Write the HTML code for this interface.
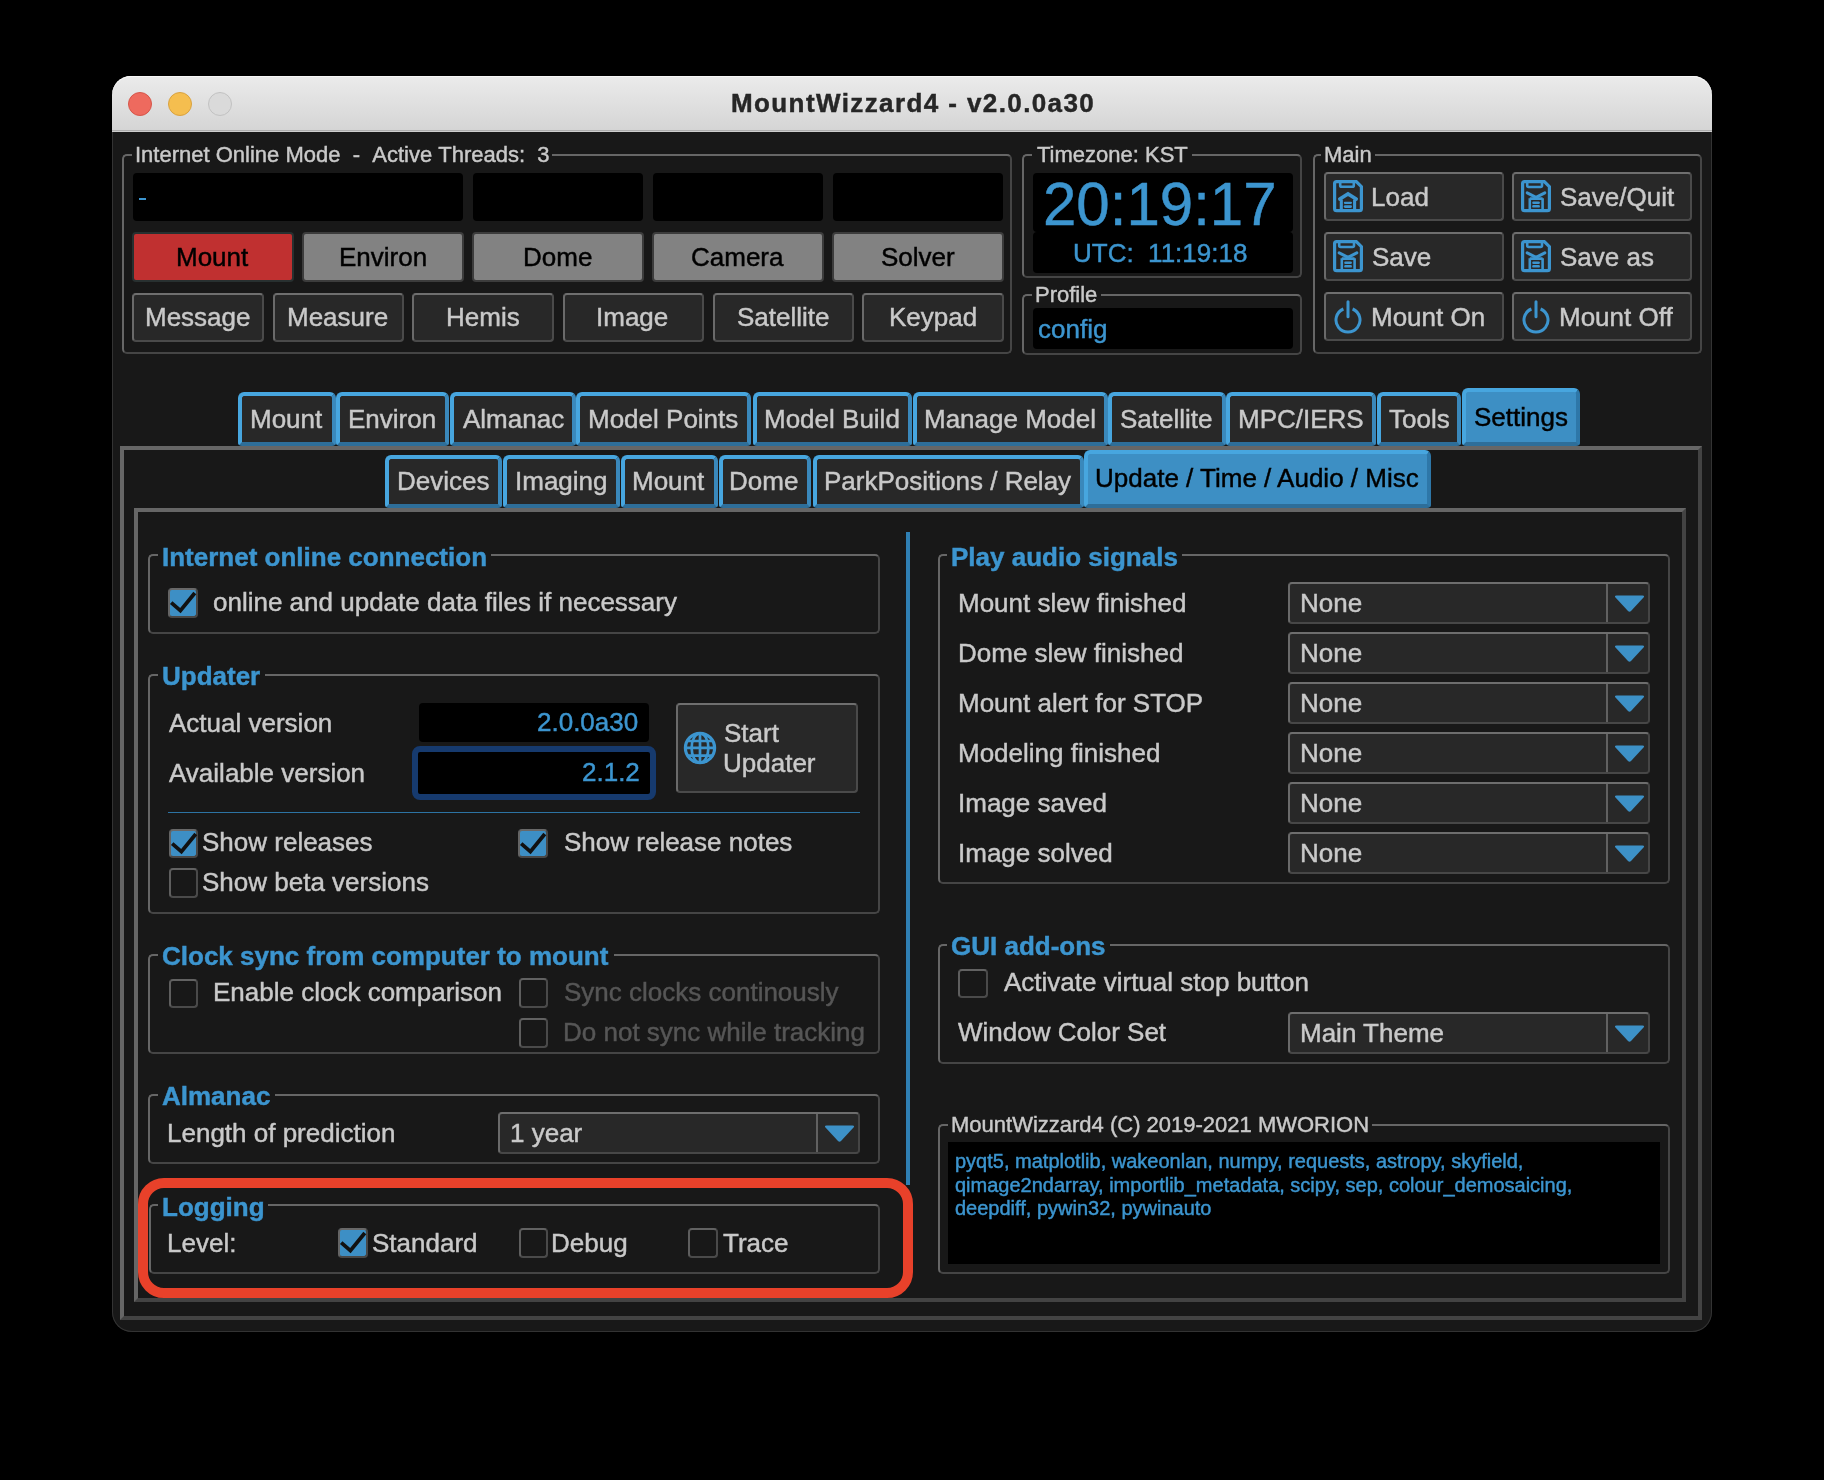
<!DOCTYPE html>
<html><head><meta charset="utf-8"><style>
html,body{margin:0;padding:0;background:#000;width:1824px;height:1480px;overflow:hidden}
body{position:relative;font-family:"Liberation Sans",sans-serif}
.a{position:absolute;box-sizing:border-box}
.t{position:absolute;white-space:pre;will-change:transform;-webkit-text-stroke:0.45px currentColor}
</style></head><body>
<div class="a" style="left:112px;top:76px;width:1600px;height:1256px;background:#181818;border-radius:19px 19px 20px 20px;box-shadow:inset 0 0 0 1px #333;overflow:hidden"></div>
<div class="a" style="left:112px;top:76px;width:1600px;height:54px;background:linear-gradient(#ebebeb,#d5d5d5);border-radius:19px 19px 0 0;"></div>
<div class="a" style="left:112px;top:130px;width:1600px;height:1px;background:#acacac;"></div>
<div class="a" style="left:112px;top:131px;width:1600px;height:1px;background:#cdcdcd;"></div>
<div class="a" style="left:112px;top:76px;width:1600px;height:20px;border-radius:19px 19px 0 0;box-shadow:inset 0 1px 0 #f8f8f8"></div>
<div class="a" style="left:128px;top:92px;width:24px;height:24px;border-radius:50%;background:#ee6a5e;box-sizing:border-box;border:1px solid #d6564a"></div>
<div class="a" style="left:168px;top:92px;width:24px;height:24px;border-radius:50%;background:#f5be4f;box-sizing:border-box;border:1px solid #d9a240"></div>
<div class="a" style="left:208px;top:92px;width:24px;height:24px;border-radius:50%;background:#dadada;box-sizing:border-box;border:1px solid #c2c2c2"></div>
<div class="t" style="left:730.70px;top:90.39px;font-size:26px;line-height:26px;color:#262626;font-weight:bold;letter-spacing:1.4px;">MountWizzard4 - v2.0.0a30</div>
<div class="a" style="left:122px;top:154px;width:890px;height:200px;border-style:solid;border-width:2px;border-color:#666666 #454545 #454545 #666666;border-radius:5px;"></div>
<div class="a" style="left:131.5px;top:153px;width:420.0px;height:5px;background:#181818;"></div>
<div class="t" style="left:134.50px;top:144.38px;font-size:22px;line-height:22px;color:#c9c9c9;">Internet&nbsp;Online&nbsp;Mode&nbsp;&nbsp;-&nbsp;&nbsp;Active&nbsp;Threads:&nbsp;&nbsp;3</div>
<div class="a" style="left:133px;top:173px;width:330px;height:47.5px;background:#000;border-radius:4px;"></div>
<div class="a" style="left:473px;top:173px;width:170px;height:47.5px;background:#000;border-radius:4px;"></div>
<div class="a" style="left:653px;top:173px;width:170px;height:47.5px;background:#000;border-radius:4px;"></div>
<div class="a" style="left:833px;top:173px;width:170px;height:47.5px;background:#000;border-radius:4px;"></div>
<div class="a" style="left:138.8px;top:198px;width:7.199999999999989px;height:2px;background:#3c95cf;"></div>
<div class="a" style="left:132px;top:232px;width:162px;height:50px;background:#c03030;border:2px solid #283030;border-radius:4px;"></div>
<div class="t" style="left:176.00px;top:244.19px;font-size:26px;line-height:26px;color:#000;">Mount</div>
<div class="a" style="left:302px;top:232px;width:162px;height:50px;background:#828282;border:2px solid #3c3c3c;border-radius:4px;"></div>
<div class="t" style="left:338.50px;top:244.19px;font-size:26px;line-height:26px;color:#000;">Environ</div>
<div class="a" style="left:472px;top:232px;width:172px;height:50px;background:#828282;border:2px solid #3c3c3c;border-radius:4px;"></div>
<div class="t" style="left:522.50px;top:244.19px;font-size:26px;line-height:26px;color:#000;">Dome</div>
<div class="a" style="left:652px;top:232px;width:172px;height:50px;background:#828282;border:2px solid #3c3c3c;border-radius:4px;"></div>
<div class="t" style="left:691.00px;top:244.19px;font-size:26px;line-height:26px;color:#000;">Camera</div>
<div class="a" style="left:832px;top:232px;width:172px;height:50px;background:#828282;border:2px solid #3c3c3c;border-radius:4px;"></div>
<div class="t" style="left:881.00px;top:244.19px;font-size:26px;line-height:26px;color:#000;">Solver</div>
<div class="a" style="left:132px;top:292.5px;width:132px;height:49.0px;background:#282828;border-style:solid;border-width:2px;border-color:#6f6f6f #4a4a4a #4a4a4a #6a6a6a;border-radius:4px;"></div>
<div class="t" style="left:144.50px;top:303.79px;font-size:26px;line-height:26px;color:#c9c9c9;">Message</div>
<div class="a" style="left:272.5px;top:292.5px;width:131.5px;height:49.0px;background:#282828;border-style:solid;border-width:2px;border-color:#6f6f6f #4a4a4a #4a4a4a #6a6a6a;border-radius:4px;"></div>
<div class="t" style="left:286.75px;top:303.79px;font-size:26px;line-height:26px;color:#c9c9c9;">Measure</div>
<div class="a" style="left:412px;top:292.5px;width:142px;height:49.0px;background:#282828;border-style:solid;border-width:2px;border-color:#6f6f6f #4a4a4a #4a4a4a #6a6a6a;border-radius:4px;"></div>
<div class="t" style="left:445.50px;top:303.79px;font-size:26px;line-height:26px;color:#c9c9c9;">Hemis</div>
<div class="a" style="left:562.5px;top:292.5px;width:141.5px;height:49.0px;background:#282828;border-style:solid;border-width:2px;border-color:#6f6f6f #4a4a4a #4a4a4a #6a6a6a;border-radius:4px;"></div>
<div class="t" style="left:596.25px;top:303.79px;font-size:26px;line-height:26px;color:#c9c9c9;">Image</div>
<div class="a" style="left:712.5px;top:292.5px;width:141.5px;height:49.0px;background:#282828;border-style:solid;border-width:2px;border-color:#6f6f6f #4a4a4a #4a4a4a #6a6a6a;border-radius:4px;"></div>
<div class="t" style="left:736.75px;top:303.79px;font-size:26px;line-height:26px;color:#c9c9c9;">Satellite</div>
<div class="a" style="left:862px;top:292.5px;width:142px;height:49.0px;background:#282828;border-style:solid;border-width:2px;border-color:#6f6f6f #4a4a4a #4a4a4a #6a6a6a;border-radius:4px;"></div>
<div class="t" style="left:888.50px;top:303.79px;font-size:26px;line-height:26px;color:#c9c9c9;">Keypad</div>
<div class="a" style="left:1022px;top:154px;width:280px;height:124px;border-style:solid;border-width:2px;border-color:#666666 #454545 #454545 #666666;border-radius:5px;"></div>
<div class="a" style="left:1032px;top:153px;width:160px;height:5px;background:#181818;"></div>
<div class="t" style="left:1037.00px;top:144.38px;font-size:22px;line-height:22px;color:#c9c9c9;">Timezone: KST</div>
<div class="a" style="left:1033px;top:173px;width:260px;height:58.5px;background:#000;border-radius:4px;"></div>
<div class="a" style="left:1033px;top:231.5px;width:260px;height:41.0px;background:#000;border-radius:4px;"></div>
<div class="t" style="left:1043.20px;top:175.31px;font-size:60px;line-height:60px;color:#3c95cf;transform:scaleY(1.03);transform-origin:0 50.79px;">20:19:17</div>
<div class="t" style="left:1073.00px;top:239.59px;font-size:26px;line-height:26px;color:#3c95cf;">UTC:&nbsp;&nbsp;11:19:18</div>
<div class="a" style="left:1022px;top:294px;width:280px;height:60.5px;border-style:solid;border-width:2px;border-color:#666666 #454545 #454545 #666666;border-radius:5px;"></div>
<div class="a" style="left:1031.8px;top:293px;width:69.0px;height:5px;background:#181818;"></div>
<div class="t" style="left:1034.80px;top:284.18px;font-size:22px;line-height:22px;color:#c9c9c9;">Profile</div>
<div class="a" style="left:1033px;top:308.3px;width:260px;height:40.30000000000001px;background:#000;border-radius:4px;"></div>
<div class="t" style="left:1037.70px;top:315.79px;font-size:26px;line-height:26px;color:#3c95cf;">config</div>
<div class="a" style="left:1312.5px;top:154px;width:389.5px;height:200px;border-style:solid;border-width:2px;border-color:#666666 #454545 #454545 #666666;border-radius:5px;"></div>
<div class="a" style="left:1321.3px;top:153px;width:54.0px;height:5px;background:#181818;"></div>
<div class="t" style="left:1324.30px;top:143.98px;font-size:22px;line-height:22px;color:#c9c9c9;">Main</div>
<div class="a" style="left:1324.2px;top:172px;width:179.5px;height:49px;background:#282828;border-style:solid;border-width:2px;border-color:#6f6f6f #4a4a4a #4a4a4a #6a6a6a;border-radius:4px;"></div>
<div class="t" style="left:1371.20px;top:183.79px;font-size:26px;line-height:26px;color:#c9c9c9;">Load</div>
<svg class="a" style="left:1333.0px;top:179.8px" width="32" height="33" viewBox="0 0 32 33"><path d="M1.6 3.6 Q1.6 1.6 3.6 1.6 L23.3 1.6 L28.4 6.7 L28.4 28.7 Q28.4 30.7 26.4 30.7 L3.6 30.7 Q1.6 30.7 1.6 28.7 Z" fill="none" stroke="#3c95cf" stroke-width="3.2"/><path d="M7.2 1.6 L7.2 5.4 Q7.2 6.8 8.6 6.8 L19.4 6.8 Q20.8 6.8 20.8 5.4 L20.8 1.6" fill="none" stroke="#3c95cf" stroke-width="2.6"/>
<path d="M6.8 19.0 L15 13.9 L23.2 19.0" fill="none" stroke="#3c95cf" stroke-width="3.6" stroke-linejoin="miter" stroke-linecap="round"/>
<path d="M8.3 19.5 L8.3 30 M21.6 19.5 L21.6 30" stroke="#3c95cf" stroke-width="3.1"/>
<rect x="10.8" y="21.7" width="8.2" height="2.2" rx="1.1" fill="#3c95cf"/><rect x="10.8" y="25.3" width="8.2" height="2.6" rx="1.3" fill="#3c95cf"/></svg>
<div class="a" style="left:1512.3px;top:172px;width:179.5px;height:49px;background:#282828;border-style:solid;border-width:2px;border-color:#6f6f6f #4a4a4a #4a4a4a #6a6a6a;border-radius:4px;"></div>
<div class="t" style="left:1560.30px;top:183.79px;font-size:26px;line-height:26px;color:#c9c9c9;">Save/Quit</div>
<svg class="a" style="left:1521.1px;top:179.8px" width="32" height="33" viewBox="0 0 32 33"><path d="M1.6 3.6 Q1.6 1.6 3.6 1.6 L23.3 1.6 L28.4 6.7 L28.4 28.7 Q28.4 30.7 26.4 30.7 L3.6 30.7 Q1.6 30.7 1.6 28.7 Z" fill="none" stroke="#3c95cf" stroke-width="3.2"/><path d="M6.2 1.6 L6.2 5.6 Q6.2 7.0 7.6 7.0 L19.6 7.0 Q21 7.0 21 5.6 L21 1.6" fill="none" stroke="#3c95cf" stroke-width="2.6"/>
<path d="M6.2 12.8 L15 17.3 L23.8 12.8" fill="none" stroke="#3c95cf" stroke-width="3" stroke-linecap="round" stroke-linejoin="round"/>
<path d="M8.8 18.2 L8.8 30 M21.6 18.2 L21.6 30 M8.8 18.6 L21.6 18.6" fill="none" stroke="#3c95cf" stroke-width="2.6"/>
<rect x="11.2" y="21.5" width="7.7" height="2.4" rx="1.2" fill="#3c95cf"/><rect x="11.2" y="25.1" width="7.7" height="2.5" rx="1.2" fill="#3c95cf"/></svg>
<div class="a" style="left:1324.2px;top:232px;width:179.5px;height:49px;background:#282828;border-style:solid;border-width:2px;border-color:#6f6f6f #4a4a4a #4a4a4a #6a6a6a;border-radius:4px;"></div>
<div class="t" style="left:1372.20px;top:243.79px;font-size:26px;line-height:26px;color:#c9c9c9;">Save</div>
<svg class="a" style="left:1333.0px;top:239.8px" width="32" height="33" viewBox="0 0 32 33"><path d="M1.6 3.6 Q1.6 1.6 3.6 1.6 L23.3 1.6 L28.4 6.7 L28.4 28.7 Q28.4 30.7 26.4 30.7 L3.6 30.7 Q1.6 30.7 1.6 28.7 Z" fill="none" stroke="#3c95cf" stroke-width="3.2"/><path d="M6.2 1.6 L6.2 5.6 Q6.2 7.0 7.6 7.0 L19.6 7.0 Q21 7.0 21 5.6 L21 1.6" fill="none" stroke="#3c95cf" stroke-width="2.6"/>
<path d="M6.2 12.8 L15 17.3 L23.8 12.8" fill="none" stroke="#3c95cf" stroke-width="3" stroke-linecap="round" stroke-linejoin="round"/>
<path d="M8.8 18.2 L8.8 30 M21.6 18.2 L21.6 30 M8.8 18.6 L21.6 18.6" fill="none" stroke="#3c95cf" stroke-width="2.6"/>
<rect x="11.2" y="21.5" width="7.7" height="2.4" rx="1.2" fill="#3c95cf"/><rect x="11.2" y="25.1" width="7.7" height="2.5" rx="1.2" fill="#3c95cf"/></svg>
<div class="a" style="left:1512.3px;top:232px;width:179.5px;height:49px;background:#282828;border-style:solid;border-width:2px;border-color:#6f6f6f #4a4a4a #4a4a4a #6a6a6a;border-radius:4px;"></div>
<div class="t" style="left:1560.30px;top:243.79px;font-size:26px;line-height:26px;color:#c9c9c9;">Save as</div>
<svg class="a" style="left:1521.1px;top:239.8px" width="32" height="33" viewBox="0 0 32 33"><path d="M1.6 3.6 Q1.6 1.6 3.6 1.6 L23.3 1.6 L28.4 6.7 L28.4 28.7 Q28.4 30.7 26.4 30.7 L3.6 30.7 Q1.6 30.7 1.6 28.7 Z" fill="none" stroke="#3c95cf" stroke-width="3.2"/><path d="M6.2 1.6 L6.2 5.6 Q6.2 7.0 7.6 7.0 L19.6 7.0 Q21 7.0 21 5.6 L21 1.6" fill="none" stroke="#3c95cf" stroke-width="2.6"/>
<path d="M6.2 12.8 L15 17.3 L23.8 12.8" fill="none" stroke="#3c95cf" stroke-width="3" stroke-linecap="round" stroke-linejoin="round"/>
<path d="M8.8 18.2 L8.8 30 M21.6 18.2 L21.6 30 M8.8 18.6 L21.6 18.6" fill="none" stroke="#3c95cf" stroke-width="2.6"/>
<rect x="11.2" y="21.5" width="7.7" height="2.4" rx="1.2" fill="#3c95cf"/><rect x="11.2" y="25.1" width="7.7" height="2.5" rx="1.2" fill="#3c95cf"/></svg>
<div class="a" style="left:1324.2px;top:292px;width:179.5px;height:49px;background:#282828;border-style:solid;border-width:2px;border-color:#6f6f6f #4a4a4a #4a4a4a #6a6a6a;border-radius:4px;"></div>
<div class="t" style="left:1371.20px;top:303.79px;font-size:26px;line-height:26px;color:#c9c9c9;">Mount On</div>
<svg class="a" style="left:1333.9px;top:299.8px" width="28" height="36" viewBox="0 0 28 36"><path d="M9.4 9.0 A12 12 0 1 0 18.6 9.0" fill="none" stroke="#3c95cf" stroke-width="3"/>
<path d="M14 1.7 L14 16.7" stroke="#3c95cf" stroke-width="3" stroke-linecap="round"/></svg>
<div class="a" style="left:1512.3px;top:292px;width:179.5px;height:49px;background:#282828;border-style:solid;border-width:2px;border-color:#6f6f6f #4a4a4a #4a4a4a #6a6a6a;border-radius:4px;"></div>
<div class="t" style="left:1559.30px;top:303.79px;font-size:26px;line-height:26px;color:#c9c9c9;">Mount Off</div>
<svg class="a" style="left:1522.0px;top:299.8px" width="28" height="36" viewBox="0 0 28 36"><path d="M9.4 9.0 A12 12 0 1 0 18.6 9.0" fill="none" stroke="#3c95cf" stroke-width="3"/>
<path d="M14 1.7 L14 16.7" stroke="#3c95cf" stroke-width="3" stroke-linecap="round"/></svg>
<div class="a" style="left:120px;top:446px;width:1582px;height:874px;border-style:solid;border-width:4px;border-color:#666666 #434343 #434343 #666666;"></div>
<div class="a" style="left:238px;top:392px;width:97.5px;height:54px;background:#282828;border-style:solid;border-width:4px;border-color:#47a6df #3a88bb #2e6e99 #47a6df;border-radius:6px 6px 4px 4px"></div>
<div class="t" style="left:249.75px;top:405.99px;font-size:26px;line-height:26px;color:#c9c9c9;">Mount</div>
<div class="a" style="left:336px;top:392px;width:113px;height:54px;background:#282828;border-style:solid;border-width:4px;border-color:#47a6df #3a88bb #2e6e99 #47a6df;border-radius:6px 6px 4px 4px"></div>
<div class="t" style="left:348.00px;top:405.99px;font-size:26px;line-height:26px;color:#c9c9c9;">Environ</div>
<div class="a" style="left:450px;top:392px;width:125.5px;height:54px;background:#282828;border-style:solid;border-width:4px;border-color:#47a6df #3a88bb #2e6e99 #47a6df;border-radius:6px 6px 4px 4px"></div>
<div class="t" style="left:462.75px;top:405.99px;font-size:26px;line-height:26px;color:#c9c9c9;">Almanac</div>
<div class="a" style="left:576px;top:392px;width:175px;height:54px;background:#282828;border-style:solid;border-width:4px;border-color:#47a6df #3a88bb #2e6e99 #47a6df;border-radius:6px 6px 4px 4px"></div>
<div class="t" style="left:588.00px;top:405.99px;font-size:26px;line-height:26px;color:#c9c9c9;">Model Points</div>
<div class="a" style="left:752.5px;top:392px;width:159.0px;height:54px;background:#282828;border-style:solid;border-width:4px;border-color:#47a6df #3a88bb #2e6e99 #47a6df;border-radius:6px 6px 4px 4px"></div>
<div class="t" style="left:764.00px;top:405.99px;font-size:26px;line-height:26px;color:#c9c9c9;">Model Build</div>
<div class="a" style="left:912.5px;top:392px;width:195.0px;height:54px;background:#282828;border-style:solid;border-width:4px;border-color:#47a6df #3a88bb #2e6e99 #47a6df;border-radius:6px 6px 4px 4px"></div>
<div class="t" style="left:924.00px;top:405.99px;font-size:26px;line-height:26px;color:#c9c9c9;">Manage Model</div>
<div class="a" style="left:1108px;top:392px;width:117.5px;height:54px;background:#282828;border-style:solid;border-width:4px;border-color:#47a6df #3a88bb #2e6e99 #47a6df;border-radius:6px 6px 4px 4px"></div>
<div class="t" style="left:1120.25px;top:405.99px;font-size:26px;line-height:26px;color:#c9c9c9;">Satellite</div>
<div class="a" style="left:1226px;top:392px;width:149.5px;height:54px;background:#282828;border-style:solid;border-width:4px;border-color:#47a6df #3a88bb #2e6e99 #47a6df;border-radius:6px 6px 4px 4px"></div>
<div class="t" style="left:1237.75px;top:405.99px;font-size:26px;line-height:26px;color:#c9c9c9;">MPC/IERS</div>
<div class="a" style="left:1376.5px;top:392px;width:84.5px;height:54px;background:#282828;border-style:solid;border-width:4px;border-color:#47a6df #3a88bb #2e6e99 #47a6df;border-radius:6px 6px 4px 4px"></div>
<div class="t" style="left:1388.75px;top:405.99px;font-size:26px;line-height:26px;color:#c9c9c9;">Tools</div>
<div class="a" style="left:1462px;top:388px;width:118px;height:58px;background:#3d8fc4;border-style:solid;border-width:4px;border-color:#47a6df #2e77a8 #2e6e99 #47a6df;border-radius:6px 6px 4px 4px"></div>
<div class="t" style="left:1474.00px;top:403.59px;font-size:26px;line-height:26px;color:#000;">Settings</div>
<div class="a" style="left:134px;top:508px;width:1552px;height:794px;border-style:solid;border-width:4px;border-color:#666666 #434343 #434343 #666666;"></div>
<div class="a" style="left:384.5px;top:454.5px;width:117.0px;height:53.5px;background:#282828;border-style:solid;border-width:4px;border-color:#47a6df #3a88bb #2e6e99 #47a6df;border-radius:6px 6px 4px 4px"></div>
<div class="t" style="left:396.50px;top:468.49px;font-size:26px;line-height:26px;color:#c9c9c9;">Devices</div>
<div class="a" style="left:502.5px;top:454.5px;width:117.0px;height:53.5px;background:#282828;border-style:solid;border-width:4px;border-color:#47a6df #3a88bb #2e6e99 #47a6df;border-radius:6px 6px 4px 4px"></div>
<div class="t" style="left:514.50px;top:468.49px;font-size:26px;line-height:26px;color:#c9c9c9;">Imaging</div>
<div class="a" style="left:620.5px;top:454.5px;width:97.0px;height:53.5px;background:#282828;border-style:solid;border-width:4px;border-color:#47a6df #3a88bb #2e6e99 #47a6df;border-radius:6px 6px 4px 4px"></div>
<div class="t" style="left:632.00px;top:468.49px;font-size:26px;line-height:26px;color:#c9c9c9;">Mount</div>
<div class="a" style="left:718.5px;top:454.5px;width:92.5px;height:53.5px;background:#282828;border-style:solid;border-width:4px;border-color:#47a6df #3a88bb #2e6e99 #47a6df;border-radius:6px 6px 4px 4px"></div>
<div class="t" style="left:729.25px;top:468.49px;font-size:26px;line-height:26px;color:#c9c9c9;">Dome</div>
<div class="a" style="left:812.5px;top:454.5px;width:271.0px;height:53.5px;background:#282828;border-style:solid;border-width:4px;border-color:#47a6df #3a88bb #2e6e99 #47a6df;border-radius:6px 6px 4px 4px"></div>
<div class="t" style="left:823.50px;top:468.49px;font-size:26px;line-height:26px;color:#c9c9c9;">ParkPositions / Relay</div>
<div class="a" style="left:1084.2px;top:450px;width:347.29999999999995px;height:58px;background:#3d8fc4;border-style:solid;border-width:4px;border-color:#47a6df #2e77a8 #2e6e99 #47a6df;border-radius:6px 6px 4px 4px"></div>
<div class="t" style="left:1095.35px;top:465.49px;font-size:26px;line-height:26px;color:#000;">Update / Time / Audio / Misc</div>
<div class="a" style="left:906px;top:532px;width:4px;height:653px;background:#2f7fb3;"></div>
<div class="a" style="left:148px;top:554px;width:732px;height:80px;border-style:solid;border-width:2px;border-color:#666666 #454545 #454545 #666666;border-radius:5px;"></div>
<div class="a" style="left:157.5px;top:553px;width:333.0px;height:5px;background:#181818;"></div>
<div class="t" style="left:161.50px;top:543.99px;font-size:26px;line-height:26px;color:#3c95cf;font-weight:bold;">Internet online connection</div>
<div class="a" style="left:168.2px;top:588px;width:29.5px;height:29.5px;background:#3d8fc5;border-style:solid;border-width:2px;border-color:#686868 #484848 #484848 #646464;border-radius:4px;"></div>
<svg class="a" style="left:168.2px;top:588px" width="30" height="30" viewBox="0 0 30 30"><path d="M3.2 14.6 L12.4 22.6 L26.8 5.0" fill="none" stroke="#111" stroke-width="3.8" stroke-linejoin="miter" stroke-miterlimit="6"/></svg>
<div class="t" style="left:213.40px;top:589.49px;font-size:26px;line-height:26px;color:#c9c9c9;">online and update data files if necessary</div>
<div class="a" style="left:148px;top:674px;width:732px;height:240px;border-style:solid;border-width:2px;border-color:#666666 #454545 #454545 #666666;border-radius:5px;"></div>
<div class="a" style="left:157.5px;top:673px;width:107.0px;height:5px;background:#181818;"></div>
<div class="t" style="left:161.50px;top:663.39px;font-size:26px;line-height:26px;color:#3c95cf;font-weight:bold;">Updater</div>
<div class="t" style="left:168.50px;top:709.69px;font-size:26px;line-height:26px;color:#c9c9c9;">Actual version</div>
<div class="t" style="left:168.50px;top:759.69px;font-size:26px;line-height:26px;color:#c9c9c9;">Available version</div>
<div class="a" style="left:418.6px;top:702.8px;width:230.39999999999998px;height:39.700000000000045px;background:#000;border-radius:4px;"></div>
<div class="t" style="left:537.00px;top:709.49px;font-size:26px;line-height:26px;color:#3c95cf;">2.0.0a30</div>
<div class="a" style="left:412.3px;top:745.8px;width:243.49999999999994px;height:54.0px;background:#000;border:6.5px solid #163a6e;border-radius:8px;"></div>
<div class="t" style="left:582.00px;top:759.39px;font-size:26px;line-height:26px;color:#3c95cf;">2.1.2</div>
<div class="a" style="left:676.3px;top:702.5px;width:181.5px;height:90.70000000000005px;background:#282828;border-style:solid;border-width:2px;border-color:#6f6f6f #4a4a4a #4a4a4a #6a6a6a;border-radius:4px;"></div>
<div class="t" style="left:723.80px;top:719.69px;font-size:26px;line-height:26px;color:#c9c9c9;">Start</div>
<div class="t" style="left:722.80px;top:749.79px;font-size:26px;line-height:26px;color:#c9c9c9;">Updater</div>
<svg class="a" style="left:683px;top:731px" width="34" height="34" viewBox="0 0 34 34">
<circle cx="17" cy="17" r="14.6" fill="none" stroke="#3c95cf" stroke-width="3.2"/>
<ellipse cx="17" cy="17" rx="8.4" ry="14.6" fill="none" stroke="#3c95cf" stroke-width="2.7"/>
<path d="M17 2 L17 32 M2.5 16.8 L31.5 16.8 M4.2 10 L29.8 10 M4.2 24.6 L29.8 24.6" stroke="#3c95cf" stroke-width="2.7"/>
</svg>
<div class="a" style="left:168px;top:812px;width:692px;height:1.2000000000000455px;background:#2c73a3;"></div>
<div class="a" style="left:168.5px;top:828.8px;width:29.5px;height:29.5px;background:#3d8fc5;border-style:solid;border-width:2px;border-color:#686868 #484848 #484848 #646464;border-radius:4px;"></div>
<svg class="a" style="left:168.5px;top:828.8px" width="30" height="30" viewBox="0 0 30 30"><path d="M3.2 14.6 L12.4 22.6 L26.8 5.0" fill="none" stroke="#111" stroke-width="3.8" stroke-linejoin="miter" stroke-miterlimit="6"/></svg>
<div class="t" style="left:202.20px;top:829.39px;font-size:26px;line-height:26px;color:#c9c9c9;">Show releases</div>
<div class="a" style="left:518.4px;top:828.8px;width:29.5px;height:29.5px;background:#3d8fc5;border-style:solid;border-width:2px;border-color:#686868 #484848 #484848 #646464;border-radius:4px;"></div>
<svg class="a" style="left:518.4px;top:828.8px" width="30" height="30" viewBox="0 0 30 30"><path d="M3.2 14.6 L12.4 22.6 L26.8 5.0" fill="none" stroke="#111" stroke-width="3.8" stroke-linejoin="miter" stroke-miterlimit="6"/></svg>
<div class="t" style="left:563.50px;top:829.39px;font-size:26px;line-height:26px;color:#c9c9c9;">Show release notes</div>
<div class="a" style="left:168.5px;top:868.3px;width:29.5px;height:29.5px;border-style:solid;border-width:2px;border-color:#626262 #4a4a4a #4a4a4a #5e5e5e;border-radius:4px;"></div>
<div class="t" style="left:202.20px;top:869.39px;font-size:26px;line-height:26px;color:#c9c9c9;">Show beta versions</div>
<div class="a" style="left:148px;top:954px;width:732px;height:100px;border-style:solid;border-width:2px;border-color:#666666 #454545 #454545 #666666;border-radius:5px;"></div>
<div class="a" style="left:157.5px;top:953px;width:456.0px;height:5px;background:#181818;"></div>
<div class="t" style="left:161.50px;top:942.99px;font-size:26px;line-height:26px;color:#3c95cf;font-weight:bold;">Clock sync from computer to mount</div>
<div class="a" style="left:168.5px;top:978.5px;width:29.5px;height:29.5px;border-style:solid;border-width:2px;border-color:#626262 #4a4a4a #4a4a4a #5e5e5e;border-radius:4px;"></div>
<div class="t" style="left:213.20px;top:979.29px;font-size:26px;line-height:26px;color:#c9c9c9;">Enable clock comparison</div>
<div class="a" style="left:518.6px;top:978.3px;width:29.5px;height:29.5px;border-style:solid;border-width:2px;border-color:#626262 #4a4a4a #4a4a4a #5e5e5e;border-radius:4px;"></div>
<div class="t" style="left:564.00px;top:979.19px;font-size:26px;line-height:26px;color:#565656;">Sync clocks continously</div>
<div class="a" style="left:518.6px;top:1018.3px;width:29.5px;height:29.5px;border-style:solid;border-width:2px;border-color:#626262 #4a4a4a #4a4a4a #5e5e5e;border-radius:4px;"></div>
<div class="t" style="left:563.00px;top:1019.49px;font-size:26px;line-height:26px;color:#565656;">Do not sync while tracking</div>
<div class="a" style="left:148px;top:1094px;width:732px;height:70px;border-style:solid;border-width:2px;border-color:#666666 #454545 #454545 #666666;border-radius:5px;"></div>
<div class="a" style="left:157.5px;top:1093px;width:117.0px;height:5px;background:#181818;"></div>
<div class="t" style="left:161.50px;top:1083.39px;font-size:26px;line-height:26px;color:#3c95cf;font-weight:bold;">Almanac</div>
<div class="t" style="left:167.20px;top:1119.59px;font-size:26px;line-height:26px;color:#c9c9c9;">Length of prediction</div>
<div class="a" style="left:498px;top:1112px;width:362px;height:42px;background:#282828;border-style:solid;border-width:2px;border-color:#6e6e6e #454545 #474747 #6a6a6a;border-radius:4px;"></div>
<div class="a" style="left:816px;top:1114px;width:2px;height:38px;background:#616161;"></div>
<svg class="a" style="left:824px;top:1124px" width="32" height="19" viewBox="0 0 32 19"><path d="M2.5 1.5 L28.5 1.5 Q31 1.5 29.5 3.5 L17 17 Q15.5 18.5 14 17 L1.5 3.5 Q0 1.5 2.5 1.5 Z" fill="#3d91c7"/></svg>
<div class="t" style="left:509.50px;top:1119.69px;font-size:26px;line-height:26px;color:#c9c9c9;">1 year</div>
<div class="a" style="left:148.5px;top:1204px;width:731.5px;height:70.29999999999995px;border-style:solid;border-width:2px;border-color:#666666 #454545 #454545 #666666;border-radius:5px;"></div>
<div class="a" style="left:157.5px;top:1203px;width:110.0px;height:5px;background:#181818;"></div>
<div class="t" style="left:161.50px;top:1193.99px;font-size:26px;line-height:26px;color:#3c95cf;font-weight:bold;">Logging</div>
<div class="t" style="left:167.00px;top:1229.59px;font-size:26px;line-height:26px;color:#c9c9c9;">Level:</div>
<div class="a" style="left:338.3px;top:1228.3px;width:29.5px;height:29.5px;background:#3d8fc5;border-style:solid;border-width:2px;border-color:#686868 #484848 #484848 #646464;border-radius:4px;"></div>
<svg class="a" style="left:338.3px;top:1228.3px" width="30" height="30" viewBox="0 0 30 30"><path d="M3.2 14.6 L12.4 22.6 L26.8 5.0" fill="none" stroke="#111" stroke-width="3.8" stroke-linejoin="miter" stroke-miterlimit="6"/></svg>
<div class="t" style="left:372.00px;top:1229.59px;font-size:26px;line-height:26px;color:#c9c9c9;">Standard</div>
<div class="a" style="left:518.6px;top:1228px;width:29.5px;height:29.5px;border-style:solid;border-width:2px;border-color:#626262 #4a4a4a #4a4a4a #5e5e5e;border-radius:4px;"></div>
<div class="t" style="left:551.00px;top:1229.59px;font-size:26px;line-height:26px;color:#c9c9c9;">Debug</div>
<div class="a" style="left:688.2px;top:1228px;width:29.5px;height:29.5px;border-style:solid;border-width:2px;border-color:#626262 #4a4a4a #4a4a4a #5e5e5e;border-radius:4px;"></div>
<div class="t" style="left:723.20px;top:1229.59px;font-size:26px;line-height:26px;color:#c9c9c9;">Trace</div>
<div class="a" style="left:138.3px;top:1178.4px;width:775px;height:119.4px;border:10.2px solid #e8412a;border-radius:26px;"></div>
<div class="a" style="left:938px;top:554px;width:732px;height:330px;border-style:solid;border-width:2px;border-color:#666666 #454545 #454545 #666666;border-radius:5px;"></div>
<div class="a" style="left:947.4px;top:553px;width:235.0000000000001px;height:5px;background:#181818;"></div>
<div class="t" style="left:951.40px;top:543.99px;font-size:26px;line-height:26px;color:#3c95cf;font-weight:bold;">Play audio signals</div>
<div class="t" style="left:957.60px;top:589.79px;font-size:26px;line-height:26px;color:#c9c9c9;">Mount slew finished</div>
<div class="a" style="left:1288px;top:582px;width:362px;height:42px;background:#282828;border-style:solid;border-width:2px;border-color:#6e6e6e #454545 #474747 #6a6a6a;border-radius:4px;"></div>
<div class="a" style="left:1606px;top:584px;width:2px;height:38px;background:#616161;"></div>
<svg class="a" style="left:1614px;top:594px" width="32" height="19" viewBox="0 0 32 19"><path d="M2.5 1.5 L28.5 1.5 Q31 1.5 29.5 3.5 L17 17 Q15.5 18.5 14 17 L1.5 3.5 Q0 1.5 2.5 1.5 Z" fill="#3d91c7"/></svg>
<div class="t" style="left:1299.50px;top:589.69px;font-size:26px;line-height:26px;color:#c9c9c9;">None</div>
<div class="t" style="left:957.60px;top:639.79px;font-size:26px;line-height:26px;color:#c9c9c9;">Dome slew finished</div>
<div class="a" style="left:1288px;top:632px;width:362px;height:42px;background:#282828;border-style:solid;border-width:2px;border-color:#6e6e6e #454545 #474747 #6a6a6a;border-radius:4px;"></div>
<div class="a" style="left:1606px;top:634px;width:2px;height:38px;background:#616161;"></div>
<svg class="a" style="left:1614px;top:644px" width="32" height="19" viewBox="0 0 32 19"><path d="M2.5 1.5 L28.5 1.5 Q31 1.5 29.5 3.5 L17 17 Q15.5 18.5 14 17 L1.5 3.5 Q0 1.5 2.5 1.5 Z" fill="#3d91c7"/></svg>
<div class="t" style="left:1299.50px;top:639.69px;font-size:26px;line-height:26px;color:#c9c9c9;">None</div>
<div class="t" style="left:957.60px;top:689.79px;font-size:26px;line-height:26px;color:#c9c9c9;">Mount alert for STOP</div>
<div class="a" style="left:1288px;top:682px;width:362px;height:42px;background:#282828;border-style:solid;border-width:2px;border-color:#6e6e6e #454545 #474747 #6a6a6a;border-radius:4px;"></div>
<div class="a" style="left:1606px;top:684px;width:2px;height:38px;background:#616161;"></div>
<svg class="a" style="left:1614px;top:694px" width="32" height="19" viewBox="0 0 32 19"><path d="M2.5 1.5 L28.5 1.5 Q31 1.5 29.5 3.5 L17 17 Q15.5 18.5 14 17 L1.5 3.5 Q0 1.5 2.5 1.5 Z" fill="#3d91c7"/></svg>
<div class="t" style="left:1299.50px;top:689.69px;font-size:26px;line-height:26px;color:#c9c9c9;">None</div>
<div class="t" style="left:957.60px;top:739.79px;font-size:26px;line-height:26px;color:#c9c9c9;">Modeling finished</div>
<div class="a" style="left:1288px;top:732px;width:362px;height:42px;background:#282828;border-style:solid;border-width:2px;border-color:#6e6e6e #454545 #474747 #6a6a6a;border-radius:4px;"></div>
<div class="a" style="left:1606px;top:734px;width:2px;height:38px;background:#616161;"></div>
<svg class="a" style="left:1614px;top:744px" width="32" height="19" viewBox="0 0 32 19"><path d="M2.5 1.5 L28.5 1.5 Q31 1.5 29.5 3.5 L17 17 Q15.5 18.5 14 17 L1.5 3.5 Q0 1.5 2.5 1.5 Z" fill="#3d91c7"/></svg>
<div class="t" style="left:1299.50px;top:739.69px;font-size:26px;line-height:26px;color:#c9c9c9;">None</div>
<div class="t" style="left:957.60px;top:789.79px;font-size:26px;line-height:26px;color:#c9c9c9;">Image saved</div>
<div class="a" style="left:1288px;top:782px;width:362px;height:42px;background:#282828;border-style:solid;border-width:2px;border-color:#6e6e6e #454545 #474747 #6a6a6a;border-radius:4px;"></div>
<div class="a" style="left:1606px;top:784px;width:2px;height:38px;background:#616161;"></div>
<svg class="a" style="left:1614px;top:794px" width="32" height="19" viewBox="0 0 32 19"><path d="M2.5 1.5 L28.5 1.5 Q31 1.5 29.5 3.5 L17 17 Q15.5 18.5 14 17 L1.5 3.5 Q0 1.5 2.5 1.5 Z" fill="#3d91c7"/></svg>
<div class="t" style="left:1299.50px;top:789.69px;font-size:26px;line-height:26px;color:#c9c9c9;">None</div>
<div class="t" style="left:957.60px;top:839.79px;font-size:26px;line-height:26px;color:#c9c9c9;">Image solved</div>
<div class="a" style="left:1288px;top:832px;width:362px;height:42px;background:#282828;border-style:solid;border-width:2px;border-color:#6e6e6e #454545 #474747 #6a6a6a;border-radius:4px;"></div>
<div class="a" style="left:1606px;top:834px;width:2px;height:38px;background:#616161;"></div>
<svg class="a" style="left:1614px;top:844px" width="32" height="19" viewBox="0 0 32 19"><path d="M2.5 1.5 L28.5 1.5 Q31 1.5 29.5 3.5 L17 17 Q15.5 18.5 14 17 L1.5 3.5 Q0 1.5 2.5 1.5 Z" fill="#3d91c7"/></svg>
<div class="t" style="left:1299.50px;top:839.69px;font-size:26px;line-height:26px;color:#c9c9c9;">None</div>
<div class="a" style="left:938px;top:944px;width:732px;height:120px;border-style:solid;border-width:2px;border-color:#666666 #454545 #454545 #666666;border-radius:5px;"></div>
<div class="a" style="left:947.4px;top:943px;width:163.0000000000001px;height:5px;background:#181818;"></div>
<div class="t" style="left:951.40px;top:933.49px;font-size:26px;line-height:26px;color:#3c95cf;font-weight:bold;">GUI add-ons</div>
<div class="a" style="left:958.4px;top:968.5px;width:29.5px;height:29.5px;border-style:solid;border-width:2px;border-color:#626262 #4a4a4a #4a4a4a #5e5e5e;border-radius:4px;"></div>
<div class="t" style="left:1004.40px;top:968.99px;font-size:26px;line-height:26px;color:#c9c9c9;">Activate virtual stop button</div>
<div class="t" style="left:958.40px;top:1019.49px;font-size:26px;line-height:26px;color:#c9c9c9;">Window Color Set</div>
<div class="a" style="left:1288px;top:1012px;width:362px;height:42px;background:#282828;border-style:solid;border-width:2px;border-color:#6e6e6e #454545 #474747 #6a6a6a;border-radius:4px;"></div>
<div class="a" style="left:1606px;top:1014px;width:2px;height:38px;background:#616161;"></div>
<svg class="a" style="left:1614px;top:1024px" width="32" height="19" viewBox="0 0 32 19"><path d="M2.5 1.5 L28.5 1.5 Q31 1.5 29.5 3.5 L17 17 Q15.5 18.5 14 17 L1.5 3.5 Q0 1.5 2.5 1.5 Z" fill="#3d91c7"/></svg>
<div class="t" style="left:1299.50px;top:1019.69px;font-size:26px;line-height:26px;color:#c9c9c9;">Main Theme</div>
<div class="a" style="left:938px;top:1124px;width:732px;height:150px;border-style:solid;border-width:2px;border-color:#666666 #454545 #454545 #666666;border-radius:5px;"></div>
<div class="a" style="left:947.8px;top:1123px;width:424.0px;height:5px;background:#181818;"></div>
<div class="t" style="left:950.80px;top:1113.98px;font-size:22px;line-height:22px;color:#c9c9c9;">MountWizzard4 (C) 2019-2021 MWORION</div>
<div class="a" style="left:948px;top:1142.2px;width:711.5999999999999px;height:121.79999999999995px;background:#000;"></div>
<div class="t" style="left:955.20px;top:1150.97px;font-size:20px;line-height:20px;color:#3c95cf;">pyqt5, matplotlib, wakeonlan, numpy, requests, astropy, skyfield,</div>
<div class="t" style="left:955.20px;top:1174.57px;font-size:20px;line-height:20px;color:#3c95cf;">qimage2ndarray, importlib_metadata, scipy, sep, colour_demosaicing,</div>
<div class="t" style="left:955.20px;top:1198.37px;font-size:20px;line-height:20px;color:#3c95cf;">deepdiff, pywin32, pywinauto</div>
</body></html>
